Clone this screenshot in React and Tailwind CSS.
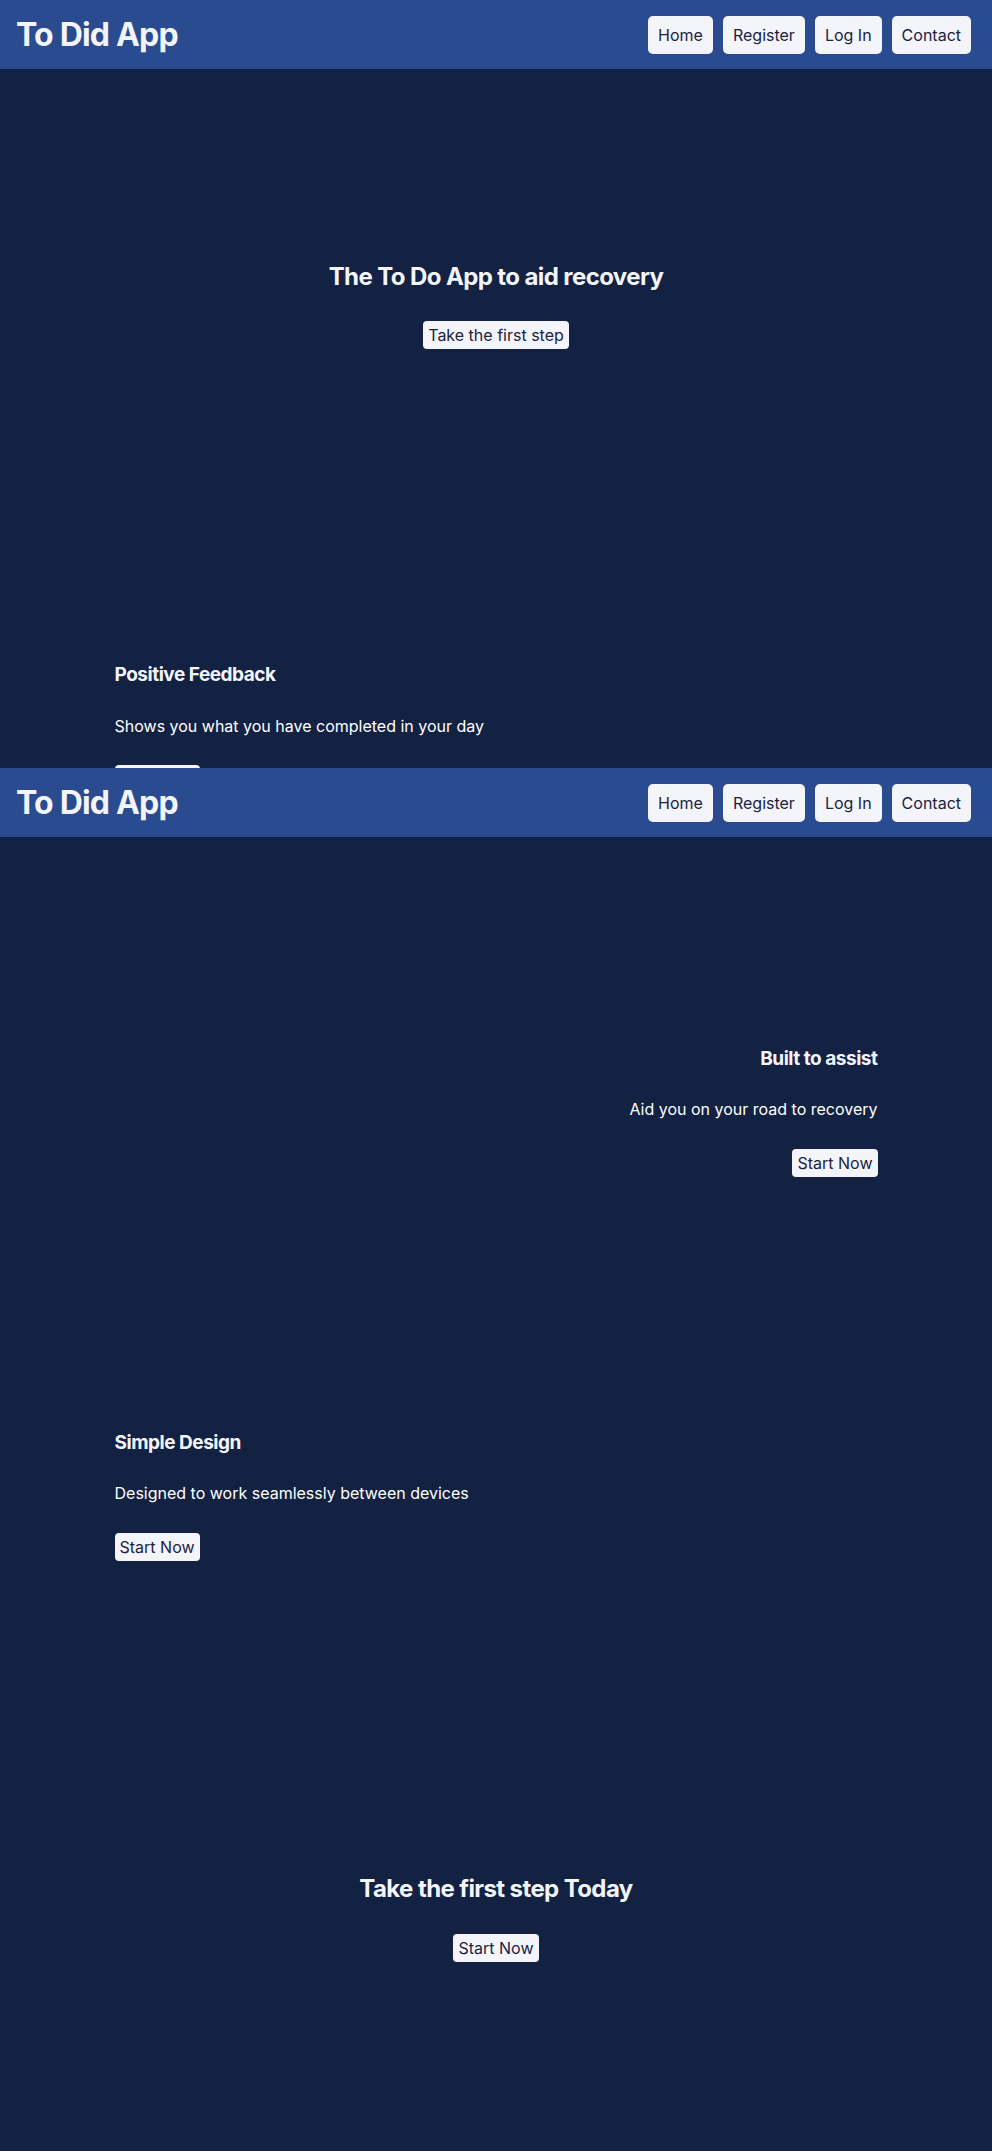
import React from "react";

const links = ["Home", "Register", "Log In", "Contact"];

const NavBar = () => (
  <header className="h-[69px] bg-[#2a4b8f] flex items-center justify-between pl-4 pr-[21px]">
    <h1 className="text-[32px] leading-[38px] font-bold tracking-tight text-[#f4f5fb]">To Did App</h1>
    <nav className="flex gap-[10px]">
      {links.map((link) => (
        <button
          key={link}
          className="bg-[#f4f5fb] text-[#1a2340] text-[16px] leading-[20px] px-[10px] py-[9px] rounded-[5px]"
        >
          {link}
        </button>
      ))}
    </nav>
  </header>
);

const ActionButton = ({ label }) => (
  <button className="bg-[#f4f5fb] text-[#1a2340] text-[16px] leading-[20px] px-[5px] py-[4px] rounded-[4px]">
    {label}
  </button>
);

const Feature = ({ title, text, align = "left", className = "" }) => (
  <div className={`w-[763px] mx-auto flex flex-col ${align === "right" ? "items-end text-right" : "items-start"} ${className}`}>
    <h3 className="text-[19px] leading-[24px] font-bold tracking-tight text-[#f4f5fb]">{title}</h3>
    <p className="mt-[26px] text-[16px] leading-[24px] text-white">{text}</p>
    <div className="mt-[28px]">
      <ActionButton label="Start Now" />
    </div>
  </div>
);

const App = () => {
  return (
    <div className="min-h-[2151px] bg-[#132142]" style={{ fontFamily: "Inter, 'Noto Sans', sans-serif" }}>
      <div className="h-[768px] overflow-hidden">
        <NavBar />
        <section className="pt-[193px] flex flex-col items-center">
          <h2 className="text-[24px] leading-[29px] font-bold tracking-tight text-[#f4f5fb]">The To Do App to aid recovery</h2>
          <div className="mt-[30px]">
            <ActionButton label="Take the first step" />
          </div>
        </section>
        <div className="w-[763px] mx-auto flex flex-col items-start mt-[314px]">
          <h3 className="text-[19px] leading-[24px] font-bold tracking-tight text-[#f4f5fb]">Positive Feedback</h3>
          <p className="mt-[27px] text-[16px] leading-[24px] text-white">Shows you what you have completed in your day</p>
          <div className="mt-[27px]">
            <ActionButton label="Start Now" />
          </div>
        </div>
      </div>

      <NavBar />

      <Feature
        title="Built to assist"
        text="Aid you on your road to recovery"
        align="right"
        className="mt-[210px]"
      />
      <Feature
        title="Simple Design"
        text="Designed to work seamlessly between devices"
        className="mt-[254px]"
      />

      <section className="mt-[313px] flex flex-col items-center pb-[188px]">
        <h2 className="text-[24px] leading-[29px] font-bold tracking-tight text-[#f4f5fb]">Take the first step Today</h2>
        <div className="mt-[31px]">
          <ActionButton label="Start Now" />
        </div>
      </section>
    </div>
  );
};

export default App;
